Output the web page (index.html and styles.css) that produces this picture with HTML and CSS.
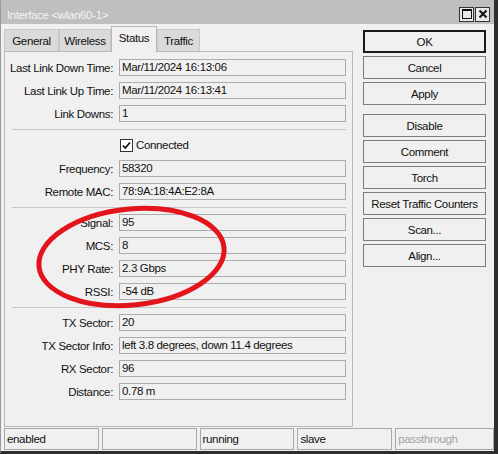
FILE: index.html
```html
<!DOCTYPE html>
<html>
<head>
<meta charset="utf-8">
<title>Interface</title>
<link rel="stylesheet" href="styles.css">
</head>
<body>
<div class="window">
  <div class="titlebar">
    <span class="title">Interface &lt;wlan60-1&gt;</span>
    <div class="tbtns">
      <span class="tbtn"><svg width="12" height="12" viewBox="0 0 12 12"><rect x="1.5" y="1.5" width="9" height="9" fill="none" stroke="#111" stroke-width="1"/><rect x="1" y="1" width="10" height="2" fill="#111"/></svg></span>
      <span class="tbtn"><svg width="12" height="12" viewBox="0 0 12 12"><path d="M2.5 2.5 L9.5 9.5 M9.5 2.5 L2.5 9.5" stroke="#111" stroke-width="2"/></svg></span>
    </div>
  </div>
  <div class="main">
    <div class="left">
      <div class="tabs">
        <div class="tab tab-general">General</div>
        <div class="tab tab-wireless">Wireless</div>
        <div class="tab tab-status active">Status</div>
        <div class="tab tab-traffic">Traffic</div>
      </div>
      <div class="panel">
        <div class="row"><span class="label">Last Link Down Time:</span><div class="field">Mar/11/2024 16:13:06</div></div>
        <div class="row"><span class="label">Last Link Up Time:</span><div class="field">Mar/11/2024 16:13:41</div></div>
        <div class="row"><span class="label">Link Downs:</span><div class="field">1</div></div>
        <div class="sep"></div>
        <div class="row row-check"><span class="label"></span><div class="check"><span class="box"><svg width="11" height="11" viewBox="0 0 11 11"><path d="M2 5.5 L4.3 8 L9 2.5" fill="none" stroke="#111" stroke-width="1.8"/></svg></span>Connected</div></div>
        <div class="row"><span class="label">Frequency:</span><div class="field">58320</div></div>
        <div class="row"><span class="label">Remote MAC:</span><div class="field">78:9A:18:4A:E2:8A</div></div>
        <div class="sep"></div>
        <div class="row"><span class="label">Signal:</span><div class="field">95</div></div>
        <div class="row"><span class="label">MCS:</span><div class="field">8</div></div>
        <div class="row"><span class="label">PHY Rate:</span><div class="field">2.3 Gbps</div></div>
        <div class="row"><span class="label">RSSI:</span><div class="field">-54 dB</div></div>
        <div class="sep"></div>
        <div class="row"><span class="label">TX Sector:</span><div class="field">20</div></div>
        <div class="row"><span class="label">TX Sector Info:</span><div class="field">left 3.8 degrees, down 11.4 degrees</div></div>
        <div class="row"><span class="label">RX Sector:</span><div class="field">96</div></div>
        <div class="row"><span class="label">Distance:</span><div class="field">0.78 m</div></div>
      </div>
    </div>
    <div class="buttons">
      <div class="btn default">OK</div>
      <div class="btn">Cancel</div>
      <div class="btn">Apply</div>
      <div class="btn group">Disable</div>
      <div class="btn">Comment</div>
      <div class="btn">Torch</div>
      <div class="btn">Reset Traffic Counters</div>
      <div class="btn">Scan...</div>
      <div class="btn">Align...</div>
    </div>
  </div>
  <div class="statusbar">
    <div class="cell">enabled</div>
    <div class="cell"></div>
    <div class="cell">running</div>
    <div class="cell">slave</div>
    <div class="cell last disabled">passthrough</div>
  </div>
  <svg class="annotation" width="498" height="454" viewBox="0 0 498 454">
    <ellipse cx="131.5" cy="257" rx="93" ry="48" transform="rotate(-6 131.5 257)" fill="none" stroke="#e3141c" stroke-width="5"/>
  </svg>
</div>
</body>
</html>
```

FILE: styles.css
```css
html, body {
  margin: 0;
  padding: 0;
}

body {
  font-family: "Liberation Sans", Arial, sans-serif;
  font-size: 11.5px;
  letter-spacing: -0.35px;
  color: #111;
}

.window {
  position: relative;
  width: 498px;
  height: 454px;
  box-sizing: border-box;
  background: #f0f0f0;
  border-left: 1px solid #9a9a9a;
  border-right: 4px solid #2e2e2e;
  border-bottom: 3px solid #2e2e2e;
  display: flex;
  flex-direction: column;
  overflow: hidden;
}

.titlebar {
  height: 24px;
  flex: none;
  background: #bfbfbf;
  display: flex;
  align-items: center;
  justify-content: space-between;
  padding: 0 4px 0 6px;
}

.title {
  color: #f4f4f4;
  padding-top: 6px;
}

.tbtns {
  display: flex;
  gap: 1px;
  padding-top: 4px;
}

.tbtn {
  width: 13px;
  height: 13px;
  border: 1px solid #333;
  background: #e9e9e9;
  display: flex;
  align-items: center;
  justify-content: center;
}

.main {
  flex: none;
  height: 403px;
  display: flex;
  gap: 10px;
  padding-left: 3px;
}

.left {
  width: 349px;
  display: flex;
  flex-direction: column;
  padding-top: 2px;
}

.tabs {
  height: 25px;
  display: flex;
  align-items: flex-end;
  position: relative;
  z-index: 1;
}

.tab {
  height: 22px;
  box-sizing: border-box;
  border: 1px solid #c8c8c8;
  border-bottom: none;
  background: #dadada;
  display: flex;
  align-items: center;
  justify-content: center;
  padding-top: 1px;
}

.tab-general { width: 55px; }
.tab-wireless { width: 52px; }
.tab-status { width: 46px; }
.tab-traffic { width: 43px; }

.tab.active {
  height: 26px;
  margin-bottom: -1px;
  background: #f0f0f0;
  border-color: #b9b9b9;
  padding-top: 0;
  padding-bottom: 4px;
}

.panel {
  flex: 1;
  box-sizing: border-box;
  border: 1px solid #b9b9b9;
  padding-top: 7px;
  display: flex;
  flex-direction: column;
  gap: 6px;
}

.row {
  display: grid;
  grid-template-columns: 108px 227px;
  column-gap: 6px;
  align-items: center;
  height: 17px;
}

.row-check {
  height: 18px;
}

.label {
  text-align: right;
  white-space: nowrap;
}

.field {
  height: 17px;
  box-sizing: border-box;
  border: 1px solid #acacac;
  padding-left: 2px;
  line-height: 15px;
  white-space: nowrap;
  overflow: hidden;
}

.sep {
  height: 1px;
  margin: 1px 6px 0 7px;
  background: #c6c6c6;
}

.check {
  display: flex;
  align-items: center;
  gap: 3px;
  padding-left: 1px;
}

.box {
  width: 13px;
  height: 13px;
  box-sizing: border-box;
  border: 1px solid #333;
  background: #fff;
  display: flex;
  align-items: center;
  justify-content: center;
}

.buttons {
  width: 123px;
  padding-top: 6px;
  display: flex;
  flex-direction: column;
  gap: 3px;
}

.btn {
  height: 23px;
  box-sizing: border-box;
  border: 1px solid #7d7d7d;
  background: #f0f0f0;
  display: flex;
  align-items: center;
  justify-content: center;
  white-space: nowrap;
}

.btn.default {
  border: 2px solid #1a1a1a;
}

.btn.group {
  margin-top: 6px;
}

.statusbar {
  margin-top: 1px;
  margin-left: 3px;
  height: 22px;
  display: flex;
  gap: 3px;
}

.cell {
  width: 95px;
  box-sizing: border-box;
  border: 1px solid #a9a9a9;
  padding-left: 2px;
  line-height: 20px;
  white-space: nowrap;
}

.cell.last {
  width: 99px;
}

.cell.disabled {
  color: #a3a3a3;
}

.annotation {
  position: absolute;
  left: -1px;
  top: 0;
  pointer-events: none;
}
```
